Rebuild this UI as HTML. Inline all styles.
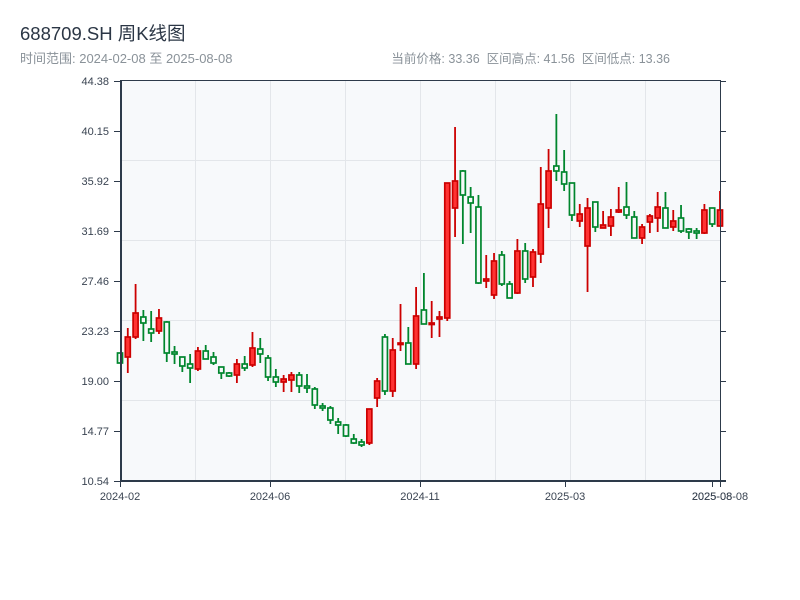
<!DOCTYPE html>
<html><head><meta charset="utf-8"><style>
html,body{margin:0;padding:0;background:#fff;width:800px;height:600px;overflow:hidden}
svg{display:block;font-family:"Liberation Sans","Noto Sans CJK SC",sans-serif}
</style></head><body>
<svg id="s" width="800" height="600" xmlns="http://www.w3.org/2000/svg">
<text x="20" y="40" font-size="18.5" fill="#2b3645">688709.SH 周K线图</text>
<text x="20" y="63" font-size="13" fill="#8a9299">时间范围: 2024-02-08 至 2025-08-08</text>
<text x="670" y="63" font-size="12.5" fill="#8a9299" text-anchor="end" style="white-space:pre">当前价格: 33.36  区间高点: 41.56  区间低点: 13.36</text>
<rect x="120" y="80" width="600" height="401" fill="#f7f9fb"/>
<g stroke="#e3e6ea" stroke-width="1">
<line x1="195.5" y1="81" x2="195.5" y2="481"/><line x1="270.5" y1="81" x2="270.5" y2="481"/>
<line x1="345.5" y1="81" x2="345.5" y2="481"/><line x1="420.5" y1="81" x2="420.5" y2="481"/>
<line x1="495.5" y1="81" x2="495.5" y2="481"/><line x1="570.5" y1="81" x2="570.5" y2="481"/>
<line x1="645.5" y1="81" x2="645.5" y2="481"/>
<line x1="120" y1="160.5" x2="720" y2="160.5"/><line x1="120" y1="240.5" x2="720" y2="240.5"/>
<line x1="120" y1="320.5" x2="720" y2="320.5"/><line x1="120" y1="400.5" x2="720" y2="400.5"/>
</g>
<g id="c"></g>
<g stroke="#2d3a4a">
<line x1="120" y1="80.5" x2="720" y2="80.5" stroke-width="1"/>
<line x1="720.5" y1="80" x2="720.5" y2="482" stroke-width="1"/>
<line x1="121" y1="80" x2="121" y2="482" stroke-width="2"/>
<line x1="120" y1="481" x2="726" y2="481" stroke-width="2"/>
<g stroke-width="1" id="t"></g>
</g>
<g font-size="11" fill="#3a4452" text-anchor="end" id="yl"></g>
<g font-size="11" fill="#3a4452" text-anchor="middle">
<text x="120" y="500">2024-02</text><text x="270" y="500">2024-06</text>
<text x="420" y="500">2024-11</text><text x="565" y="500">2025-03</text>
<text x="712" y="500">2025-08</text><text x="720" y="500">2025-08-08</text>
</g>
</svg>
<script>
var d=[
["g",353,363,353,363],["r",337,357,328,373],["r",313,337,284,339],["g",317,323,310,341],["g",329,333,311,342],
["r",318,331,309,334],["g",322,353,321,362],["g",352,354,346,364],["g",357,366,357,372],["g",364,368,354,383],
["r",351,369,347,371],["g",351,359,345,359],["g",357,363,352,365],["g",367,373,367,379],["g",373,376,372,377],
["r",364,375,359,383],["g",364,368,356,371],["r",348,365,332,367],["g",349,354,338,363],["g",358,377,355,381],
["g",377,382,369,387],["r",379,382,375,392],["r",375,380,372,392],["g",375,386,372,393],["g",386,388,374,393],
["g",389,405,387,409],["g",406,408,403,411],["g",408,420,406,424],["g",422,425,418,434],["g",425,436,424,437],
["g",439,443,434,444],["g",442,445,439,447],["r",409,443,409,445],["r",381,398,378,407],["g",337,391,334,395],
["r",350,391,338,397],["r",343,344,304,351],["g",343,364,327,364],["r",316,364,287,369],["g",310,324,273,324],
["r",323,324,301,338],["r",317,319,311,337],["r",183,318,183,321],["r",181,208,127,237],["g",171,195,170,244],
["g",197,203,187,233],["g",207,283,195,284],["r",279,281,255,288],["r",261,295,253,299],["g",255,284,251,286],
["g",284,298,281,298],["r",251,293,239,294],["g",251,279,243,283],["r",252,277,249,287],["r",204,254,167,263],
["r",171,208,149,228],["g",166,171,114,181],["g",172,184,150,191],["g",183,215,183,221],["r",214,221,204,227],
["r",208,246,198,292],["g",202,227,202,232],["r",225,228,211,228],["r",217,226,209,236],["r",210,212,187,213],
["g",207,215,182,219],["g",217,238,211,238],["r",227,238,224,244],["r",216,222,214,233],["r",207,218,192,232],
["g",208,228,192,228],["r",221,227,210,231],["g",218,231,205,233],["g",229,232,228,239],["g",231,233,228,239],
["r",210,233,204,234],["g",208,224,208,227],["r",210,226,191,226]];
var h="";
for(var i=0;i<d.length;i++){var c=d[i],x=120+i*600/77,col=c[0]=="r"?"#cc0000":"#00862d";
h+='<line x1="'+x+'" y1="'+c[3]+'" x2="'+x+'" y2="'+c[4]+'" stroke="'+col+'" stroke-width="1.8"/>';
var bh=Math.max(c[2]-c[1],1.5);
h+='<rect x="'+(x-2.5)+'" y="'+c[1]+'" width="5" height="'+bh+'" stroke="'+col+'" stroke-width="1.7" fill="'+(c[0]=="r"?"#ff3333":"#f7f9fb")+'"/>';}
document.getElementById("c").innerHTML=h;
var lab=["44.38","40.15","35.92","31.69","27.46","23.23","19.00","14.77","10.54"],t="",y="";
for(var k=0;k<9;k++){var yy=81+k*50;t+='<line x1="114" y1="'+(yy+.5)+'" x2="120" y2="'+(yy+.5)+'"/><line x1="720" y1="'+(yy+.5)+'" x2="726" y2="'+(yy+.5)+'"/>';
y+='<text x="109" y="'+(yy+4)+'">'+lab[k]+'</text>';}
[120,270,420,565,712,720].forEach(function(x){t+='<line x1="'+(x+.5)+'" y1="481" x2="'+(x+.5)+'" y2="487"/>';});
document.getElementById("t").innerHTML=t;document.getElementById("yl").innerHTML=y;
</script>
</body></html>
